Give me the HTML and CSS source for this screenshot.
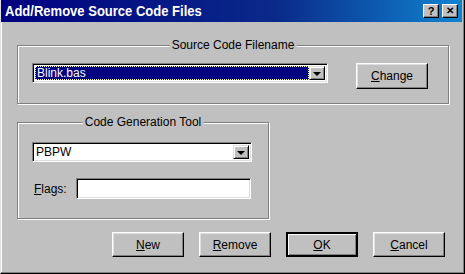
FILE: index.html
```html
<!DOCTYPE html>
<html lang="en">
<head>
    <meta charset="UTF-8">
    <title>Add/Remove Source Code Files</title>
    <link rel="stylesheet" href="styles.css">
</head>
<body>
    <div class="window">
        <div class="titlebar">
            <span class="title">Add/Remove Source Code Files</span>
            <div class="title-buttons">
                <span class="tbtn">?</span>
                <span class="tbtn tbtn-close">&#x2715;</span>
            </div>
        </div>

        <div class="group group-source">
            <span class="group-title">Source Code Filename</span>
            <div class="row-source">
                <div class="combo combo-source">
                    <div class="combo-field selected"><span class="focus">Blink.bas</span></div>
                    <span class="combo-arrow"></span>
                </div>
                <button class="btn btn-change"><u>C</u>hange</button>
            </div>
        </div>

        <div class="group group-tool">
            <span class="group-title">Code Generation Tool</span>
            <div class="combo combo-tool">
                <div class="combo-field">PBPW</div>
                <span class="combo-arrow"></span>
            </div>
            <div class="row-flags">
                <label for="flags"><u>F</u>lags:</label>
                <input type="text" id="flags" class="textbox">
            </div>
        </div>

        <div class="actions">
            <button class="btn"><u>N</u>ew</button>
            <button class="btn"><u>R</u>emove</button>
            <button class="btn btn-default"><u>O</u>K</button>
            <button class="btn"><u>C</u>ancel</button>
        </div>
    </div>
</body>
</html>
```

FILE: styles.css
```css
body {
    margin: 0;
    background-color: #c0c0c0;
    font-family: "Liberation Sans", Arial, sans-serif;
    font-size: 12px;
    color: #000;
}
.window {
    width: 465px;
    height: 274px;
    box-sizing: border-box;
    background-color: #c0c0c0;
    border-left: 1px solid #dfdfdf;
    border-right: 1px solid #000;
    border-bottom: 1px solid #000;
    box-shadow: inset -1px -1px 0 #808080, inset 1px 0 0 #fff;
    display: flex;
    flex-direction: column;
}
.titlebar {
    height: 22px;
    margin-right: 2px;
    background: linear-gradient(to right, #000080 0%, #0a2a8a 60%, #1084d0 100%);
    display: flex;
    align-items: center;
    justify-content: space-between;
    padding-left: 4px;
}
.title {
    color: #fff;
    font-weight: bold;
    font-size: 14px;
    transform: scaleX(0.93);
    transform-origin: left center;
}
.title-buttons {
    display: flex;
    gap: 3px;
    margin-right: 4px;
}
.tbtn {
    width: 16px;
    height: 14px;
    box-sizing: border-box;
    background-color: #c0c0c0;
    border-top: 1px solid #fff;
    border-left: 1px solid #fff;
    border-right: 1px solid #000;
    border-bottom: 1px solid #000;
    box-shadow: inset -1px -1px 0 #808080;
    font-weight: bold;
    font-size: 11px;
    line-height: 12px;
    text-align: center;
}
.tbtn-close {
    font-size: 10px;
}
.group {
    position: relative;
    box-sizing: border-box;
    border: 1px solid #808080;
    box-shadow: inset 1px 1px 0 #fff, 1px 1px 0 #fff;
    margin-left: 16px;
}
.group-title {
    position: absolute;
    top: -8px;
    left: 50%;
    transform: translateX(-50%);
    background-color: #c0c0c0;
    padding: 0 2px;
    line-height: 14px;
    white-space: nowrap;
}
.group-source {
    margin-top: 23px;
    width: 432px;
    height: 59px;
    padding: 17px 0 0 14px;
}
.row-source {
    display: flex;
    align-items: flex-start;
    gap: 28px;
}
.group-tool {
    margin-top: 18px;
    width: 252px;
    height: 97px;
    padding: 19px 0 0 14px;
}
.combo {
    height: 20px;
    box-sizing: border-box;
    background-color: #fff;
    border-top: 1px solid #808080;
    border-left: 1px solid #808080;
    border-right: 1px solid #fff;
    border-bottom: 1px solid #fff;
    box-shadow: inset 1px 1px 0 #000, inset -1px -1px 0 #dfdfdf;
    display: flex;
    padding: 2px;
}
.combo-source {
    width: 296px;
}
.combo-tool {
    width: 220px;
}
.combo-field {
    flex: 1;
    line-height: 14px;
    padding-left: 1px;
}
.combo-field.selected {
    background-color: #000080;
    color: #fff;
    outline: 1px dotted #ffffc0;
    outline-offset: -1px;
}
.focus {
    padding-left: 1px;
}
.combo-arrow {
    width: 16px;
    box-sizing: border-box;
    background-color: #c0c0c0;
    border-top: 1px solid #dfdfdf;
    border-left: 1px solid #dfdfdf;
    border-right: 1px solid #000;
    border-bottom: 1px solid #000;
    box-shadow: inset 1px 1px 0 #fff, inset -1px -1px 0 #808080;
    display: flex;
    align-items: center;
    justify-content: center;
}
.combo-arrow::before {
    content: "";
    border-left: 4px solid transparent;
    border-right: 4px solid transparent;
    border-top: 4px solid #000;
    margin-top: 1px;
}
.row-flags {
    display: flex;
    align-items: center;
    margin-top: 16px;
    margin-left: 2px;
}
.row-flags label {
    width: 42px;
    color: #000;
}
.textbox {
    width: 175px;
    height: 21px;
    box-sizing: border-box;
    margin: 0;
    padding: 0;
    background-color: #fff;
    border-top: 1px solid #808080;
    border-left: 1px solid #808080;
    border-right: 1px solid #fff;
    border-bottom: 1px solid #fff;
    box-shadow: inset 1px 1px 0 #000, inset -1px -1px 0 #dfdfdf;
    outline: none;
}
.btn {
    width: 72px;
    height: 25px;
    box-sizing: border-box;
    margin: 0;
    padding: 0;
    background-color: #c0c0c0;
    font-family: "Liberation Sans", Arial, sans-serif;
    font-size: 12px;
    color: #000;
    border-top: 1px solid #fff;
    border-left: 1px solid #fff;
    border-right: 1px solid #000;
    border-bottom: 1px solid #000;
    box-shadow: inset -1px -1px 0 #808080, inset 1px 1px 0 #dfdfdf;
}
.btn-change {
    height: 26px;
}
.btn-default {
    border: 2px solid #000;
    box-shadow: inset 1px 1px 0 #fff, inset -1px -1px 0 #808080;
}
.actions {
    display: flex;
    gap: 15px;
    margin-top: 13px;
    margin-left: 111px;
}
```
